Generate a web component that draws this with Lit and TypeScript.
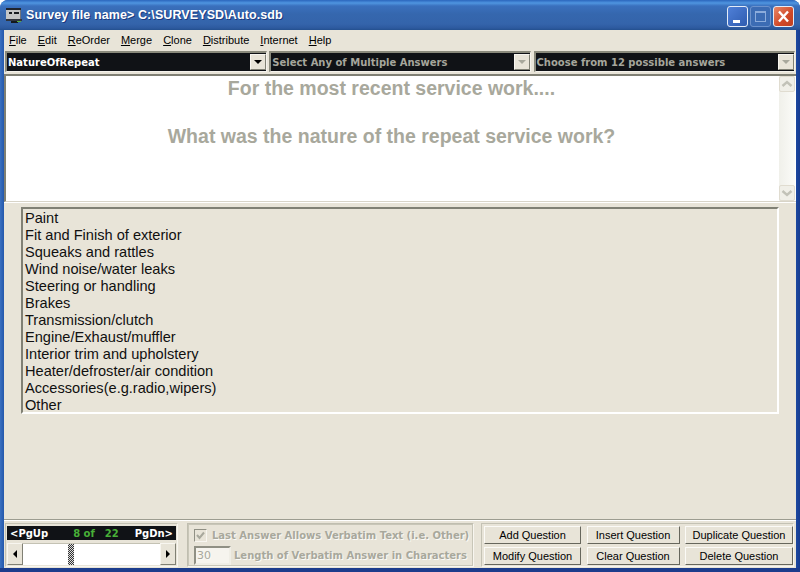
import { LitElement, html, css, svg } from "lit"
import { customElement } from "lit/decorators.js"

const menus: [string, string][] = [
  ["F", "ile"], ["E", "dit"], ["R", "eOrder"], ["M", "erge"],
  ["C", "lone"], ["D", "istribute"], ["I", "nternet"], ["H", "elp"],
]

const answers = [
  "Paint", "Fit and Finish of exterior", "Squeaks and rattles", "Wind noise/water leaks",
  "Steering or handling", "Brakes", "Transmission/clutch", "Engine/Exhaust/muffler",
  "Interior trim and upholstery", "Heater/defroster/air condition",
  "Accessories(e.g.radio,wipers)", "Other",
]

const buttons = [
  "Add Question", "Insert Question", "Duplicate Question",
  "Modify Question", "Clear Question", "Delete Question",
]

const appIcon = svg`<svg width="16" height="16" viewBox="0 0 16 16">
  <rect x="0" y="0" width="15" height="2" fill="#20242c"/>
  <rect x="0" y="2" width="15" height="9" fill="#c4c6c6"/>
  <rect x="14" y="2" width="1" height="9" fill="#70747a"/>
  <rect x="3" y="4" width="3" height="2" fill="#181c20"/>
  <rect x="8" y="4" width="5" height="2" fill="#181c20"/>
  <rect x="0" y="11" width="16" height="2" fill="#30343c"/>
  <rect x="5" y="13" width="7" height="2" fill="#14181c"/>
  <rect x="11" y="13" width="4" height="1" fill="#58b040"/>
</svg>`

function chevron(up: boolean) {
  const d = up ? "M2.5 9 L7 5 L11.5 9" : "M2.5 5 L7 9 L11.5 5"
  return svg`<svg width="14" height="14" viewBox="0 0 14 14"><path d=${d} fill="none" stroke="#c2c2b8" stroke-width="2.4"/></svg>`
}

@customElement("app-root")
class AppRoot extends LitElement {
  static styles = css`
    :host {
      display: block;
      width: 800px;
      height: 572px;
      overflow: hidden;
      font-family: "Liberation Sans", Arial, sans-serif;
    }
    .window {
      width: 800px;
      height: 572px;
      box-sizing: border-box;
      display: flex;
      flex-direction: column;
      border-radius: 8px 8px 0 0;
      background: linear-gradient(90deg, #3a70c0 0, #2458ac 4px, #1c48a0 796px, #183c90 800px);
      border-bottom: 4px solid #1c3c8c;
      padding: 0 4px;
    }
    .titlebar {
      height: 30px;
      flex: none;
      margin: 0 -4px;
      padding: 0 6px 0 6px;
      display: flex;
      align-items: center;
      border-radius: 8px 8px 0 0;
      background: linear-gradient(180deg, #2b66bd 0, #4f95e0 3px, #3a70bd 6px, #3567ae 14px, #3464ab 24px, #2d5a9f 28px, #24508f 30px);
    }
    .app-icon { display: block; margin-right: 4px; margin-top: 2px; }
    .app-icon svg { display: block; }
    .title {
      color: #fff;
      font: bold 12.5px "Liberation Sans", sans-serif;
      white-space: pre;
      text-shadow: 1px 1px 0 #1c3a80;
      flex: 1;
      letter-spacing: 0.1px;
    }
    .caps { display: flex; gap: 2px; margin-top: 3px; }
    .cap {
      width: 21px;
      height: 21px;
      box-sizing: border-box;
      border: 1px solid #e4ecf8;
      border-radius: 3px;
      background: linear-gradient(135deg, #4f80d8, #2f5cb0);
    }
    .cap.off {
      border-color: #6c92cc;
      background: #3c6cb4;
    }
    .cap.close {
      background: linear-gradient(135deg, #e88868, #d04828 60%, #c04020);
    }
    .cap svg { display: block; }
    .client {
      flex: 1;
      min-height: 0;
      background: #e8e4d8;
      display: flex;
      flex-direction: column;
    }
    .menubar {
      height: 20px;
      flex: none;
      display: flex;
      align-items: center;
      padding-left: 5px;
      gap: 11px;
      font: 11px "Liberation Sans", sans-serif;
      color: #000;
    }
    .menubar u { text-underline-offset: 1px; }
    .combos {
      flex: none;
      height: 21px;
      margin-top: 1px;
      padding-left: 1px;
      display: grid;
      grid-template-columns: 261.5px 261.5px 261.5px;
      column-gap: 2.75px;
    }
    .combo {
      box-sizing: border-box;
      border: 1px solid;
      border-color: #8a8a7c #f4f2ec #f4f2ec #8a8a7c;
      border-top-width: 2px;
      border-left-width: 2px;
      background: #101216;
      display: flex;
      align-items: center;
      justify-content: space-between;
      color: #a6a69c;
      font: bold 10px "DejaVu Sans", sans-serif;
      padding-left: 1px;
    }
    .combo.on { color: #fff; }
    .combo .drop {
      width: 16px;
      height: 16px;
      flex: none;
      box-sizing: border-box;
      background: #e8e4d8;
      border: 1px solid;
      border-color: #f8f6f0 #808074 #808074 #f8f6f0;
      display: flex;
      align-items: center;
      justify-content: center;
    }
    .tri-down {
      width: 0;
      height: 0;
      border-left: 4px solid transparent;
      border-right: 4px solid transparent;
      border-top: 4px solid #a8a89c;
    }
    .combo.on .tri-down { border-top-color: #000; }
    .question {
      flex: none;
      height: 128px;
      margin-top: 2px;
      box-sizing: border-box;
      background: #fff;
      border-top: 2px solid #808074;
      border-left: 2px solid #808074;
      border-bottom: 1px solid #d8d4c8;
      display: flex;
    }
    .q-text {
      flex: 1;
      text-align: center;
      color: #a8a89c;
      font-weight: bold;
      font-size: 19.5px;
      line-height: 24px;
      padding-right: 2px;
      white-space: pre-line;
    }
    .q-scroll {
      width: 16px;
      flex: none;
      margin-right: 1px;
      background: linear-gradient(90deg, #f0f0ea, #fbfbf8);
      display: flex;
      flex-direction: column;
      justify-content: space-between;
    }
    .q-btn {
      width: 16px;
      height: 16px;
      box-sizing: border-box;
      border: 1px solid #e0dcd0;
      border-radius: 2px;
      background: #f0efe8;
      display: flex;
      align-items: center;
      justify-content: center;
    }
    .q-btn svg { flex: none; }
    .list-wrap {
      flex: 1;
      min-height: 0;
      padding: 4px 17px 0;
      border-top: 1px solid #fff;
      border-bottom: 1px solid #9c9c90;
    }
    .list {
      height: 207px;
      box-sizing: border-box;
      border: 2px solid;
      border-color: #808074 #fff #fff #808074;
      padding: 1px 0 0 2px;
      font-size: 14.6px;
      line-height: 17px;
      color: #101010;
    }
    .bottom {
      flex: none;
      height: 48px;
      border-top: 1px solid #fff;
      box-sizing: border-box;
      display: flex;
      align-items: flex-start;
      padding: 2px 0 0 1px;
    }
    .pager {
      width: 173px;
      height: 44px;
      flex: none;
      box-sizing: border-box;
      border: 1px solid;
      border-color: #c4c2b4 #f8f6f0 #f8f6f0 #c4c2b4;
      padding: 2px 0 0 1px;
    }
    .pg-bar {
      height: 14px;
      background: #101216;
      color: #fff;
      font: bold 10px "DejaVu Sans", sans-serif;
      display: flex;
      align-items: center;
      justify-content: space-between;
      padding: 0 3px 0 3px;
      margin-right: 1px;
    }
    .pg-count { color: #48b038; display: flex; gap: 10px; margin-left: 9px; }
    .pg-scroll {
      height: 22px;
      margin: 3px 1px 0 0;
      display: flex;
      background: #fff;
    }
    .pg-arrow {
      width: 16px;
      flex: none;
      box-sizing: border-box;
      background: #e8e4d8;
      border: 1px solid;
      border-color: #f8f6f0 #808074 #808074 #f8f6f0;
      display: flex;
      align-items: center;
      justify-content: center;
    }
    .tri-l, .tri-r {
      width: 0;
      height: 0;
      border-top: 4px solid transparent;
      border-bottom: 4px solid transparent;
    }
    .tri-l { border-right: 4px solid #000; }
    .tri-r { border-left: 4px solid #000; }
    .track {
      flex: 1;
      display: flex;
      padding-left: 45px;
      border-top: 1px solid #c4c2b4;
    }
    .thumb {
      width: 6px;
      box-sizing: border-box;
      background: repeating-conic-gradient(#333 0 25%, #ddd 0 50%) 0 0 / 2px 2px;
    }
    .verbatim {
      width: 287px;
      height: 44px;
      flex: none;
      margin: 0 0 0 9px;
      box-sizing: border-box;
      border: 1px solid;
      border-color: #c0beb0 #f8f6f0 #f8f6f0 #c0beb0;
      outline: 1px solid #c8c6b8;
      outline-offset: -2px;
      padding: 3px 0 0 6px;
      color: #a8a89c;
      font: bold 10px "DejaVu Sans", sans-serif;
      text-shadow: 1px 1px 0 #fbfaf6;
      white-space: nowrap;
      display: flex;
      flex-direction: column;
      gap: 4px;
    }
    .v-row { display: flex; align-items: center; height: 16px; }
    .check {
      width: 13px;
      height: 13px;
      box-sizing: border-box;
      border: 1px solid;
      border-color: #909084 #f8f6f0 #f8f6f0 #909084;
      margin-right: 5px;
      flex: none;
    }
    .check svg { display: block; }
    .v-input {
      width: 37px;
      height: 19px;
      box-sizing: border-box;
      margin-right: 3px;
      background: #f6f4ee;
      border: 2px solid;
      border-color: #909084 #f0eee6 #f0eee6 #909084;
      font: 11px "DejaVu Sans", sans-serif;
      padding-left: 1px;
      line-height: 15px;
      flex: none;
    }
    .actions {
      width: 313px;
      height: 44px;
      flex: none;
      margin-left: 7px;
      box-sizing: border-box;
      border: 1px solid;
      border-color: #c4c2b4 #f8f6f0 #f8f6f0 #c4c2b4;
      padding: 2px 0 0 2px;
      display: grid;
      grid-template-columns: 97px 93px 108px;
      grid-auto-rows: 18px;
      column-gap: 5.5px;
      row-gap: 3px;
    }
    .btn {
      box-sizing: border-box;
      padding: 0;
      border: 1px solid;
      border-color: #fbfaf6 #66665c #66665c #fbfaf6;
      background: #e8e4d8;
      color: #000;
      font: 11px "Liberation Sans", sans-serif;
      text-align: center;
    }
  `

  render() {
    return html`
      <div class="window">
        <div class="titlebar">
          <span class="app-icon">${appIcon}</span>
          <span class="title">Survey file name&gt; C:\\SURVEYSD\\Auto.sdb</span>
          <div class="caps">
            <div class="cap">
              <svg width="19" height="19" viewBox="0 0 19 19"><rect x="5" y="13" width="7" height="3" fill="#fff"/></svg>
            </div>
            <div class="cap off">
              <svg width="19" height="19" viewBox="0 0 19 19"><rect x="4.5" y="4.5" width="10" height="10" fill="none" stroke="#8cacdc"/><rect x="4" y="4" width="11" height="2" fill="#8cacdc"/></svg>
            </div>
            <div class="cap close">
              <svg width="19" height="19" viewBox="0 0 19 19"><path d="M5 4.5 L14 14.5 M14 4.5 L5 14.5" stroke="#fff" stroke-width="2.4"/></svg>
            </div>
          </div>
        </div>
        <div class="client">
          <div class="menubar">
            ${menus.map(([k, rest]) => html`<span><u>${k}</u>${rest}</span>`)}
          </div>
          <div class="combos">
            <div class="combo on">NatureOfRepeat<span class="drop"><i class="tri-down"></i></span></div>
            <div class="combo">Select Any of Multiple Answers<span class="drop"><i class="tri-down"></i></span></div>
            <div class="combo">Choose from 12 possible answers<span class="drop"><i class="tri-down"></i></span></div>
          </div>
          <div class="question">
            <div class="q-text">For the most recent service work....

What was the nature of the repeat service work?</div>
            <div class="q-scroll">
              <div class="q-btn">${chevron(true)}</div>
              <div class="q-btn">${chevron(false)}</div>
            </div>
          </div>
          <div class="list-wrap">
            <div class="list">
              ${answers.map((a) => html`<div>${a}</div>`)}
            </div>
          </div>
          <div class="bottom">
            <div class="pager">
              <div class="pg-bar">
                <span>&lt;PgUp</span>
                <span class="pg-count"><span>8 of</span><span>22</span></span>
                <span>PgDn&gt;</span>
              </div>
              <div class="pg-scroll">
                <div class="pg-arrow"><i class="tri-l"></i></div>
                <div class="track"><div class="thumb"></div></div>
                <div class="pg-arrow"><i class="tri-r"></i></div>
              </div>
            </div>
            <div class="verbatim">
              <div class="v-row">
                <span class="check">
                  <svg width="11" height="11" viewBox="0 0 11 11"><path d="M2 5 L4.5 8 L9 2.5" fill="none" stroke="#a8a89c" stroke-width="2"/></svg>
                </span>
                Last Answer Allows Verbatim Text (i.e. Other)
              </div>
              <div class="v-row">
                <span class="v-input">30</span>
                Length of Verbatim Answer in Characters
              </div>
            </div>
            <div class="actions">
              ${buttons.map((b) => html`<button class="btn">${b}</button>`)}
            </div>
          </div>
        </div>
      </div>
    `
  }
}
